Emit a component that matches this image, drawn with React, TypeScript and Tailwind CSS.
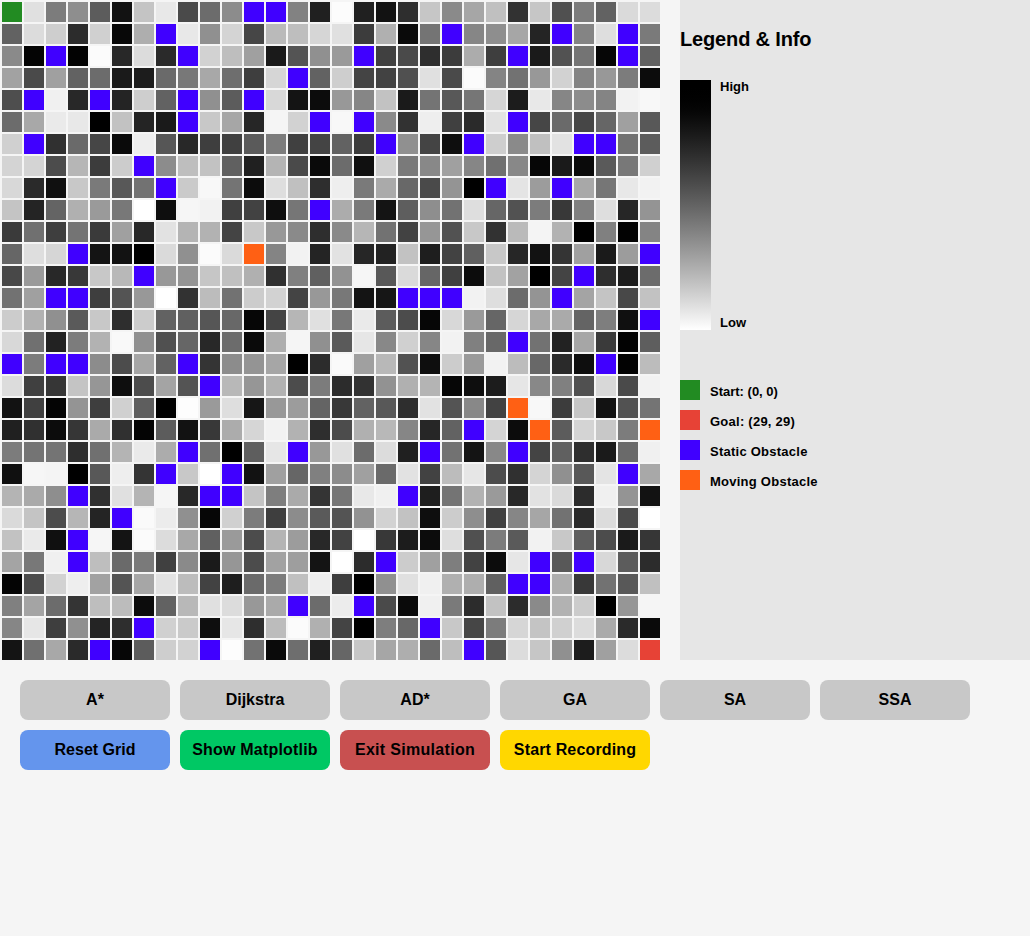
const GRID = [
  "G e0 7c 8e 5c 12 c4 e8 4a 6c 8c B B 82 20 fc 20 12 2e c6 8a a6 c0 32 c6 50 7c 62 da dc",
  "62 dc ce 2c d0 08 ae B e8 90 d4 46 ba be d6 e0 3c b0 0a 74 B 86 8e a6 24 B 84 de B 7a",
  "8a 04 B 02 fb 28 dc 2a B d2 be a0 1a 54 90 9a B 40 4a 2e 3c ac 3e B 1a 52 74 06 B 62",
  "a2 4a a0 62 6c 1a 1c 6a 78 a8 6e 3e d6 B 62 ce 44 42 50 e0 4a fb 84 72 98 d2 84 98 7c 0c",
  "4e B f0 28 B 24 ce 62 B 90 5c B d8 14 0c 98 86 c2 1a 74 58 76 d6 1c e8 86 8c 84 f2 f8",
  "6c a8 ea e8 00 c2 24 1a B c8 a6 26 f5 d2 B f8 B 8a 32 ee 40 2a e2 B 46 6a 46 66 a0 58",
  "d0 B 30 6a 46 0a ee 56 28 3e 40 5a 7c 40 44 62 3c B 90 44 0e B ce 8a c0 e2 B B 72 5c",
  "d4 d4 4c b6 3c cc B 8c be c2 60 20 b4 4a 0a 6c 10 d0 7a 88 a0 86 70 88 06 1a 0a 5a 78 d0",
  "d8 2a 10 c8 7a 58 72 B ca f8 74 0c de c0 2e ee 7a aa 68 4a 94 00 B e4 9c B a8 76 e8 f2",
  "c4 24 64 b0 9a 78 ff 0e f6 f2 40 42 0e 76 B ac 7a 14 5e 8e 72 de 66 52 7c 38 80 de 26 94",
  "3a 70 3e 74 3a a0 28 e2 b4 b2 44 c8 98 8a 2e 8a b6 72 42 96 52 c8 32 ba f4 b2 00 80 02 84",
  "66 de d6 B 14 12 00 da 90 fb da O 84 f2 24 e2 26 22 c2 1e 42 60 c8 26 12 34 a0 1a 9c B",
  "48 9a 28 38 c8 b8 B 98 94 c6 c0 b0 30 80 60 92 f6 58 da 66 40 0c c2 a2 00 44 B 2e 1c 6c",
  "72 a0 B B 3e 54 98 ff 32 bc 72 cc d2 44 98 78 14 16 B B B f2 de 6c 94 B a4 c4 48 c2",
  "cc b2 90 5a c8 2e cc 62 60 56 68 06 44 b6 e0 78 ea 5c 4c 06 d8 9a 66 d6 a8 aa 64 7e 10 B",
  "d8 70 22 7c b2 f9 90 50 66 28 6c 0a ae f5 90 5a e6 88 d0 86 f2 80 68 B 72 22 a6 3a 02 5e",
  "B 7c B B 8c 4c a6 62 B 34 8c 94 a6 00 2c fa a0 b8 52 0e cc 9a f2 bc 68 2a 0e B 02 bc",
  "dc 40 36 c4 96 0e 4c a4 54 B b8 96 b2 4c 7c 2c 32 92 b0 b4 06 0e 1c e6 88 80 50 d8 4a f2",
  "12 40 04 94 3e d0 5e 00 fd 9a de 16 98 9c 64 38 62 58 2e e2 54 88 42 O f8 3c c6 12 52 74",
  "20 30 0c 36 aa 30 04 5c 12 38 ac d6 f2 b2 2e 4c b0 b8 86 26 62 B d4 0c O 5c d4 c8 7c O",
  "7c 74 74 2e 70 b4 ea ac B 70 00 5e e6 B 98 e0 6c dc 20 B 72 14 88 B 44 60 2e 1a 6a f0",
  "10 f6 f4 00 58 ee 34 B c8 ff B 12 a0 66 80 8c a0 6a e2 42 bc e6 4c 30 d4 90 58 e4 B a8",
  "b4 aa 8e B 30 e0 b4 f5 28 B B c4 7e aa 34 76 e8 f0 B 1e 74 b2 9a 28 e2 da 2c f0 94 12",
  "da c4 4c b6 24 B fa ec 90 06 d0 7c 3e 8c 5a 54 92 d2 c2 0e cc 8e 40 86 a6 72 2a dc 4a ff",
  "c2 ea 10 B f6 14 fb dc a8 60 9a 4c b4 9c 28 42 ff 38 1c 0c de 50 7c 5a f2 c8 5e 4c 1a 36",
  "a4 78 f0 B be 6a 7a 40 8a 1a 96 4c a2 9e 14 ff 2c B cc a0 7e 42 0c e6 B 58 B d8 5c 2c",
  "04 4c d2 ee a2 54 a6 e2 bc 42 1e 6a 7c c0 ee 3e 00 90 e0 f0 b0 ae 60 B B ae 38 72 58 c0",
  "80 a4 6c 34 be bc 0c 62 b8 e0 dc 98 aa B 6c ec B 4a 0a f0 7a 2c c2 2c 8a b2 cc 00 96 f5",
  "86 e6 3e 90 24 2e B d0 ca 0e e6 2e bc fb b0 44 00 7e 68 B c8 46 7c d6 c4 d0 dc aa 2a 0a",
  "14 70 a8 2a B 06 5c ce d2 B fd 72 0a 6e 20 66 c6 a6 ae 6a be B 56 dc c6 90 1c a0 dc R",
];

const SPECIAL: Record<string, string> = {
  G: "#228b22",
  R: "#e74236",
  B: "#4000ff",
  O: "#ff6014",
};

function cellColor(v: string) {
  return SPECIAL[v] ?? `#${v}${v}${v}`;
}

function LegendRow({ swatch, label, spacing }: { swatch: string; label: string; spacing: string }) {
  return (
    <div className="flex h-5 items-center gap-[10px]">
      <div className={`h-5 w-5 ${swatch}`} />
      <span className={`pt-1 text-[13px] font-bold text-black ${spacing}`}>{label}</span>
    </div>
  );
}

function Btn({ label, color }: { label: string; color: string }) {
  return (
    <button className={`h-10 w-[150px] rounded-lg text-base font-bold text-black ${color}`}>
      {label}
    </button>
  );
}

export default function App() {
  return (
    <div className="min-h-screen bg-[#f5f5f5] font-['Liberation_Sans',Arial,sans-serif]">
      <div className="flex gap-5">
        <div className="grid h-[660px] w-[660px] grid-cols-[repeat(30,20px)] grid-rows-[repeat(30,20px)] gap-[2px] pl-[2px] pt-[2px]">
          {GRID.flatMap((row, y) =>
            row.split(" ").map((v, x) => (
              <div key={`${x}-${y}`} style={{ backgroundColor: cellColor(v) }} />
            ))
          )}
        </div>
        <div className="flex h-[660px] w-[350px] flex-col bg-[#e6e6e6]">
          <h2 className="mt-[28px] h-[23px] text-[20px] font-bold leading-[23px] tracking-[-0.15px] text-black">Legend &amp; Info</h2>
          <div className="mt-[29px] flex h-[250px] gap-[9px]">
            <div className="w-[31px] bg-linear-to-b from-black to-white" />
            <div className="flex flex-col justify-between text-[13px] font-bold text-black">
              <span className="leading-[14px]">High</span>
              <span className="leading-[15px]">Low</span>
            </div>
          </div>
          <div className="mt-[50px] flex flex-col gap-[10px]">
            <LegendRow swatch="bg-[#228b22]" label="Start: (0, 0)" spacing="tracking-normal" />
            <LegendRow swatch="bg-[#e74236]" label="Goal: (29, 29)" spacing="tracking-[0.25px]" />
            <LegendRow swatch="bg-[#4000ff]" label="Static Obstacle" spacing="tracking-[0.25px]" />
            <LegendRow swatch="bg-[#ff6014]" label="Moving Obstacle" spacing="tracking-[0.25px]" />
          </div>
        </div>
      </div>
      <div className="flex flex-col gap-[10px] px-5 pt-5">
        <div className="flex gap-[10px]">
          <Btn label="A*" color="bg-[#c8c8c8]" />
          <Btn label="Dijkstra" color="bg-[#c8c8c8]" />
          <Btn label="AD*" color="bg-[#c8c8c8]" />
          <Btn label="GA" color="bg-[#c8c8c8]" />
          <Btn label="SA" color="bg-[#c8c8c8]" />
          <Btn label="SSA" color="bg-[#c8c8c8]" />
        </div>
        <div className="flex gap-[10px]">
          <Btn label="Reset Grid" color="bg-[#6495ed]" />
          <Btn label="Show Matplotlib" color="bg-[#00c864] tracking-[0.2px]" />
          <Btn label="Exit Simulation" color="bg-[#c85050] tracking-[0.3px]" />
          <Btn label="Start Recording" color="bg-[#ffd700] tracking-[0.15px]" />
        </div>
      </div>
    </div>
  );
}
